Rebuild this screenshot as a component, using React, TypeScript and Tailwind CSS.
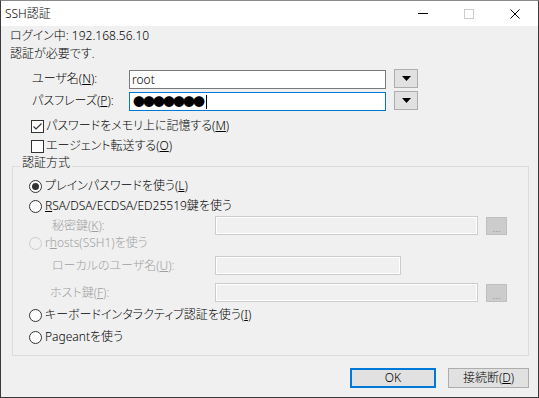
import React from "react";

const font =
  "font-['Noto_Sans','Noto_Sans_CJK_JP',sans-serif] [font-feature-settings:'palt'] text-[12px] leading-[16px] font-light";

const DropButton = () => (
  <div className="w-[24px] h-[19px] border border-[#adadad] bg-[#e1e1e1] flex items-center justify-center shrink-0">
    <svg width="9" height="5" viewBox="0 0 9 5">
      <path d="M0 0h9L4.5 5z" fill="#000000" />
    </svg>
  </div>
);

const Radio = ({ checked, disabled }: { checked?: boolean; disabled?: boolean }) => (
  <span
    className={`w-[13px] h-[13px] rounded-full border flex items-center justify-center shrink-0 ${
      disabled ? "border-[#cccccc] bg-[#f0f0f0]" : "border-[#333333] bg-white"
    }`}
  >
    {checked && <span className="w-[7px] h-[7px] rounded-full bg-[#333333]" />}
  </span>
);

const Checkbox = ({ checked }: { checked?: boolean }) => (
  <span className="w-[13px] h-[13px] border border-[#333333] bg-white flex items-center justify-center shrink-0">
    {checked && (
      <svg width="11" height="11" viewBox="0 0 11 11">
        <path d="M1.5 5.5l2.5 2.5 5.5-5.5" stroke="#333333" strokeWidth="1.2" fill="none" />
      </svg>
    )}
  </span>
);

const DisabledInput = ({ width }: { width: string }) => (
  <div
    className={`${width} h-[19px] border border-[#cccccc] bg-[#f0f0f0] shadow-[inset_0_0_0_1px_#ffffff] shrink-0`}
  />
);

const DotsButton = () => (
  <div className="w-[21px] h-[18px] border border-[#bfbfbf] bg-[#cccccc] flex items-end justify-center shrink-0">
    <span className="text-[10px] leading-[12px] text-[#838383]">...</span>
  </div>
);

const TitleBar = () => (
  <div className="h-[25px] bg-white flex items-center justify-between">
    <span className="pl-[4px] text-black">SSH認証</span>
    <div className="flex h-full">
      <div className="w-[46px] h-full flex items-center justify-center">
        <span className="w-[10px] h-[1px] bg-black" />
      </div>
      <div className="w-[46px] h-full flex items-center justify-center">
        <span className="w-[10px] h-[10px] border border-[#cccccc]" />
      </div>
      <div className="w-[46px] h-full flex items-center justify-center">
        <svg width="10" height="10" viewBox="0 0 10 10">
          <path d="M0.5 0.5l9 9M9.5 0.5l-9 9" stroke="#000000" strokeWidth="1" />
        </svg>
      </div>
    </div>
  </div>
);

const App = () => {
  return (
    <div className={`w-[539px] h-[398px] border border-[#3a3a3a] border-t-[#8a8a8a] flex flex-col ${font}`}>
      <TitleBar />
      <div className="flex-1 bg-[#f0f0f0] flex flex-col text-black">
        <div className="mt-[2px] h-[16px] pl-[9px]">ログイン中: 192.168.56.10</div>
        <div className="mt-[2px] h-[16px] pl-[9px]">認証が必要です.</div>

        {/* user / passphrase */}
        <div className="mt-[7px] h-[20px] flex items-start pl-[31px]">
          <div className="w-[97px] h-[20px] flex items-center">
            ユーザ名(<u>N</u>):
          </div>
          <div className="mt-[1px] w-[257px] h-[19px] border border-[#7a7a7a] bg-white flex items-center pl-[2px]">
            root
          </div>
          <div className="ml-[8px]">
            <DropButton />
          </div>
        </div>
        <div className="mt-[2px] h-[20px] flex items-start pl-[31px]">
          <div className="w-[97px] h-[20px] flex items-center">
            パスフレーズ(<u>P</u>):
          </div>
          <div className="mt-[1px] w-[257px] h-[19px] border border-[#0078d7] bg-white flex items-center pl-[3px]">
            <span className="font-['Noto_Sans_CJK_JP'] font-normal text-[12px] tracking-[-2px] [font-feature-settings:normal]">
              ●●●●●●●
            </span>
            <span className="ml-[3px] w-[1px] h-[14px] bg-black" />
          </div>
          <div className="ml-[8px]">
            <DropButton />
          </div>
        </div>

        <div className="mt-[5px] h-[20px] flex items-center pl-[30px] gap-[2px]">
          <Checkbox checked />
          <span>
            パスワードをメモリ上に記憶する(<u>M</u>)
          </span>
        </div>
        <div className="h-[20px] flex items-center pl-[30px] gap-[2px]">
          <Checkbox />
          <span>
            エージェント転送する(<u>O</u>)
          </span>
        </div>

        {/* auth method group */}
        <div className="relative mt-[10px] ml-[11px] mr-[9px] border border-[#dcdcdc] pt-[9px] pb-[8px] pl-[16px] flex flex-col">
          <span className="absolute left-[7px] top-[-12px] px-[2px] bg-[#f0f0f0]">認証方式</span>

          <div className="h-[20px] flex items-center gap-[3px]">
            <Radio checked />
            <span>
              プレインパスワードを使う(<u>L</u>)
            </span>
          </div>
          <div className="h-[20px] flex items-center gap-[3px]">
            <Radio />
            <span>
              <u>R</u>SA/DSA/ECDSA/ED25519鍵を使う
            </span>
          </div>
          <div className="h-[19px] flex items-center text-[#a0a0a0]">
            <span className="ml-[23px] w-[163px]">
              秘密鍵(<u>K</u>):
            </span>
            <DisabledInput width="w-[263px]" />
            <div className="ml-[8px]">
              <DotsButton />
            </div>
          </div>
          <div className="h-[16px] flex items-center gap-[3px] text-[#a0a0a0]">
            <Radio disabled />
            <span>
              r<u>h</u>osts(SSH1)を使う
            </span>
          </div>
          <div className="mt-[4px] h-[21px] flex items-center text-[#a0a0a0]">
            <span className="ml-[23px] w-[163px]">
              ローカルのユーザ名(<u>U</u>):
            </span>
            <DisabledInput width="w-[186px]" />
          </div>
          <div className="mt-[6px] h-[21px] flex items-center text-[#a0a0a0]">
            <span className="ml-[21px] w-[165px]">
              ホスト鍵(<u>F</u>):
            </span>
            <DisabledInput width="w-[263px]" />
            <div className="ml-[8px]">
              <DotsButton />
            </div>
          </div>
          <div className="mt-[2px] h-[20px] flex items-center gap-[3px]">
            <Radio />
            <span>
              キーボードインタラクティブ認証を使う(<u>I</u>)
            </span>
          </div>
          <div className="mt-[2px] h-[20px] flex items-center gap-[3px]">
            <Radio />
            <span>Pageantを使う</span>
          </div>
        </div>

        {/* buttons */}
        <div className="mt-[12px] flex justify-end pr-[9px] gap-[12px]">
          <button className="w-[86px] h-[20px] border-2 border-[#0078d7] bg-[#e1e1e1] flex items-center justify-center">
            OK
          </button>
          <button className="w-[81px] h-[20px] border border-[#adadad] bg-[#e1e1e1] flex items-center justify-center">
            接続断(<u>D</u>)
          </button>
        </div>
      </div>
    </div>
  );
};

export default App;
